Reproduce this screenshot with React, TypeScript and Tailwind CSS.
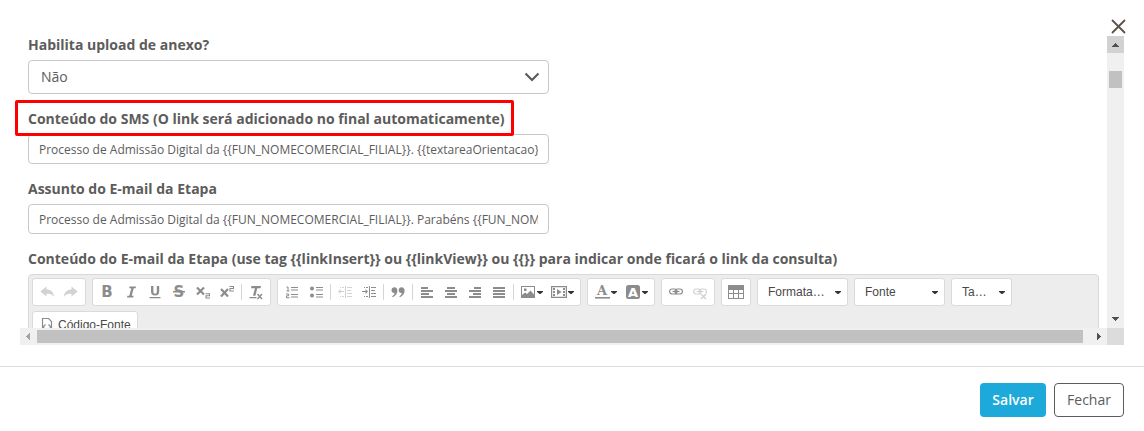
import React from "react";
import clsx from "clsx";

const BODY_FONT = "font-['Open_Sans',sans-serif]";

interface IconProps {
  children: React.ReactNode;
}

const Icon: React.FC<IconProps> = ({ children }) => (
  <svg
    width="16"
    height="16"
    viewBox="0 0 16 16"
    fill="currentColor"
    className="shrink-0 overflow-visible"
    aria-hidden="true"
  >
    {children}
  </svg>
);

const Caret = () => (
  <svg width="6" height="3" viewBox="0 0 6 3" className="shrink-0 text-[#333]" aria-hidden="true">
    <path d="M0 0h6v.8L3.500 3h-1L0 .8z" fill="currentColor" />
  </svg>
);

interface LetterProps {
  x?: number;
  y?: number;
  size?: number;
  fill?: string;
  family?: string;
  children: string;
}

const Letter: React.FC<LetterProps> = ({
  x = 8,
  y = 13,
  size = 14,
  fill = "currentColor",
  family = "DejaVu Sans",
  children,
}) => (
  <text
    x={x}
    y={y}
    fontSize={size}
    fontFamily={family + ", sans-serif"}
    fontWeight="bold"
    textAnchor="middle"
    fill={fill}
  >
    {children}
  </text>
);

interface ToolProps {
  label: string;
  disabled?: boolean;
  menu?: boolean;
  children: React.ReactNode;
}

const Tool: React.FC<ToolProps> = ({ label, disabled, menu, children }) => (
  <button
    type="button"
    aria-label={label}
    disabled={disabled}
    className={clsx(
      "flex h-6 items-center pl-1",
      menu ? "w-[31px] gap-px" : "w-6",
      disabled ? "text-[#d2d2d2]" : "text-[#8c8c8c]"
    )}
  >
    <Icon>{children}</Icon>
    {menu && <Caret />}
  </button>
);

const Group: React.FC<{ children: React.ReactNode }> = ({ children }) => (
  <div className="flex h-7 shrink-0 items-center rounded-[3px] border border-[#dadada] bg-white px-0.5">
    {children}
  </div>
);

const Separator = () => <span className="mx-0.5 h-4 w-px bg-[#d4d4d4]" />;

const Combo: React.FC<{ label: string; text: string; small?: boolean }> = ({
  label,
  text,
  small,
}) => (
  <div
    className={clsx(
      "relative h-7 shrink-0 rounded-[3px] border border-[#dadada] bg-white",
      small ? "w-[61px]" : "w-[91px]"
    )}
  >
    <select
      aria-label={label}
      className="h-full w-full appearance-none bg-transparent pl-2.5 font-['Liberation_Sans',sans-serif] text-xs text-[#484848]"
    >
      <option>{text}</option>
    </select>
    <span className="pointer-events-none absolute inset-y-0 right-1.5 flex items-center">
      <Caret />
    </span>
  </div>
);

const ALIGNMENTS = [
  { label: "Alinhar à esquerda", d: "M2 3h7v2H2zM2 6h12v2H2zM2 9h8v2H2zM2 12h12v2H2z" },
  { label: "Centralizar", d: "M4 3h8v2H4zM2 6h12v2H2zM4 9h8v2H4zM2 12h12v2H2z" },
  { label: "Alinhar à direita", d: "M7 3h7v2H7zM2 6h12v2H2zM6 9h8v2H6zM2 12h12v2H2z" },
  { label: "Justificado", d: "M2 3h12v2H2zM2 6h12v2H2zM2 9h12v2H2zM2 12h12v2H2z" },
];

const Toolbar = () => (
  <div className="flex flex-wrap gap-x-1.5 gap-y-[5px] px-[3px] pt-[3px]">
    <Group>
      <Tool label="Desfazer" disabled>
        <path d="M1.300 7.500 7.500 2.500v3c4 0 7 2 7.700 7.500-2-2.700-4.200-3.200-7.700-3.200v2.700z" />
      </Tool>
      <Tool label="Refazer" disabled>
        <path d="M14.700 7.500 8.500 2.500v3c-4 0-7 2-7.700 7.500 2-2.700 4.200-3.200 7.700-3.200v2.700z" />
      </Tool>
    </Group>

    <Group>
      <Tool label="Negrito">
        <Letter size={15}>B</Letter>
      </Tool>
      <Tool label="Itálico">
        <path d="M6.500 2.500H13l-.4 1.800h-1.900l-2 7.400h1.900l-.4 1.800H4l.4-1.800h1.900l2-7.400H6.100z" />
      </Tool>
      <Tool label="Sublinhado">
        <path d="M4 2h2.400v5.500c0 1.500.5 2.200 1.700 2.200s1.700-.7 1.700-2.200V2h2.400v5.600c0 2.700-1.400 4-4.100 4S4 10.300 4 7.600zM2.500 13h11v1.300h-11z" />
      </Tool>
      <Tool label="Tachado">
        <Letter size={15}>S</Letter>
        <path d="M2 7h12v1.500H2z" />
      </Tool>
      <Tool label="Subscrito">
        <path d="M2 3.500l7 7M9 3.500l-7 7" stroke="currentColor" strokeWidth="2.200" />
        <path d="M10.500 9.700h4v2H11V14h4" fill="none" stroke="currentColor" strokeWidth="1.100" />
      </Tool>
      <Tool label="Sobrescrito">
        <path d="M2 5l7 7.500M9 5l-7 7.500" stroke="currentColor" strokeWidth="2.200" />
        <path d="M10.500 2.500h4v2H11V7h4" fill="none" stroke="currentColor" strokeWidth="1.100" />
      </Tool>
      <Separator />
      <Tool label="Remover formatação">
        <path d="M3.500 2H13l-.5 2.200H9.300l-1.900 7.600H5l1.900-7.600H3zM1.500 13h7v1.300h-7z" />
        <path d="M9.500 10l4.500 5M14 10l-4.500 5" stroke="currentColor" strokeWidth="1.400" />
      </Tool>
    </Group>

    <Group>
      <Tool label="Lista numerada">
        <path d="M7 3h7v1H7zM7 5.500h7v1H7zM7 10h7v1H7zM7 12.500h7v1H7z" />
        <path d="M2.500 3H4v4M2.500 7h3M2 10h2.700v1.800H2.500v2h3" fill="none" stroke="currentColor" />
      </Tool>
      <Tool label="Lista com marcadores">
        <circle cx="4" cy="4.500" r="2" />
        <circle cx="4" cy="11.500" r="2" />
        <path d="M8 3h7v1H8zM8 5.500h7v1H8zM8 10h7v1H8zM8 12.500h7v1H8z" />
      </Tool>
      <Separator />
      <Tool label="Diminuir recuo" disabled>
        <path d="M1 7.500 3.500 5v2H7v1H3.500v2zM8 2h1v12H8zM10 3h5v1h-5zM10 6h4v1h-4zM10 9h5v1h-5zM10 12h5v1h-5zM3 3h1v1H3zM5 3h2v1H5zM3 12h1v1H3zM5 12h2v1H5z" />
      </Tool>
      <Tool label="Aumentar recuo">
        <path d="M7 7.500 4.500 5v2H1v1h3.500v2zM8 2h1v12H8zM10 3h5v1h-5zM10 6h4v1h-4zM10 9h5v1h-5zM10 12h5v1h-5zM3 3h1v1H3zM5 3h2v1H5zM3 12h1v1H3zM5 12h2v1H5z" />
      </Tool>
      <Separator />
      <Tool label="Citação">
        <path d="M4.400 3.200c1.900 0 3 1.400 3 3.400 0 3-1.800 5.400-4.600 6.700l-.7-.9C3.700 11.300 4.500 10.200 4.600 9 2.700 9.200 1.500 8 1.500 6.200s1.200-3 2.900-3zM11.600 3.200c1.900 0 3 1.400 3 3.400 0 3-1.800 5.400-4.600 6.700l-.7-.9c1.600-1.100 2.400-2.200 2.500-3.400-1.900.2-3.100-1-3.100-2.800s1.200-3 2.900-3z" />
      </Tool>
      <Separator />
      {ALIGNMENTS.map((a) => (
        <Tool key={a.label} label={a.label}>
          <path d={a.d} />
        </Tool>
      ))}
      <Separator />
      <Tool label="Imagem" menu>
        <path fillRule="evenodd" d="M1 2h14v12H1zM2 3v10h12V3z" />
        <path d="M2 13v-2l3-2.500L7 10l3.500-3.500L14 10.500V13zM4 4.500h2.500V7H4z" />
      </Tool>
      <Tool label="Vídeo" menu>
        <path fillRule="evenodd" d="M0 2h16v12H0zM1.200 3.200v9.600h13.600V3.200z" />
        <path d="M6 5l4.500 3L6 11zM2 4h2v2H2zM2 7h2v2H2zM2 10h2v2H2zM12 4h2v2h-2zM12 7h2v2h-2zM12 10h2v2h-2z" />
      </Tool>
    </Group>

    <Group>
      <Tool label="Cor do texto" menu>
        <Letter y={11} size={13} family="DejaVu Serif">A</Letter>
        <path d="M1 13h15v1.600H1z" />
      </Tool>
      <Tool label="Cor do fundo" menu>
        <rect x="1" y="1" width="14" height="14" rx="2.500" />
        <Letter y={13} size={13} fill="#fff">A</Letter>
      </Tool>
    </Group>

    <Group>
      <Tool label="Inserir link">
        <g fill="none" stroke="currentColor" strokeWidth="1.200">
          <rect x="1.600" y="5" width="7.400" height="5" rx="2.500" />
          <rect x="7" y="5" width="7.400" height="5" rx="2.500" />
          <path d="M4.500 7.500h7" />
        </g>
      </Tool>
      <Tool label="Remover link" disabled>
        <g fill="none" stroke="currentColor" strokeWidth="1.200">
          <rect x="1.600" y="5" width="7.400" height="5" rx="2.500" />
          <path d="M7.500 9.500C6.500 7 7.500 5 9.500 5H12c3 0 3 4 1.500 4.500M4.500 7.500h7" />
          <path d="M9 10l5 5M14 10l-5 5" strokeWidth="1.500" />
        </g>
      </Tool>
    </Group>

    <Group>
      <Tool label="Tabela">
        <path fillRule="evenodd" d="M0 1h16v14H0zM1 6v3h4V6zM6 6v3h4V6zM11 6v3h4V6zM1 10v4h4v-4zM6 10v4h4v-4zM11 10v4h4v-4z" />
      </Tool>
    </Group>

    <Combo label="Formatação" text="Formata…" />
    <Combo label="Fonte" text="Fonte" />
    <Combo label="Tamanho" text="Ta…" small />

    <Group>
      <button
        type="button"
        className="flex h-6 items-center gap-[3px] px-1 font-['Liberation_Sans',sans-serif] text-xs/[18px] text-[#484848]"
      >
        <span className="text-[#8c8c8c]">
          <Icon>
            <path d="M6 14.500H3.500v-13h6l3 3v10H11M6.500 7.500l-2.500 2.500 2.500 2.500M9.500 7.500 12 10l-2.500 2.500" fill="none" stroke="currentColor" strokeWidth="1.200" />
          </Icon>
        </span>
        Código-Fonte
      </button>
    </Group>
  </div>
);

interface TextFieldProps {
  id: string;
  label: string;
  value: string;
  highlight?: boolean;
}

const labelClass = "text-sm/[18px] font-bold text-[#5c5c5c]";

const TextField: React.FC<TextFieldProps> = ({ id, label, value, highlight }) => (
  <div className="flex flex-col items-start gap-1.5">
    <label htmlFor={id} className={clsx("relative", labelClass)}>
      {label}
      {highlight && (
        <span className="pointer-events-none absolute -top-2.5 -right-2.5 -bottom-2 -left-[13px] rounded-xs border-3 border-[#ff0000]" />
      )}
    </label>
    <input
      id={id}
      type="text"
      defaultValue={value}
      className="h-[30px] w-full max-w-[521px] rounded-[4px] border border-[#c8c8c8] bg-white px-2.5 text-xs text-[#5c5c5c]"
    />
  </div>
);

const ARROWS = {
  up: "M8 7h1v1h1v1h1v1h1v1H5v-1h1V9h1V8h1z",
  down: "M5 6h7v1h-1v1h-1v1H9v1H8V9H7V8H6V7H5z",
  left: "M10 5v7H9v-1H8v-1H7V9H6V8h1V7h1V6h1V5z",
  right: "M7 5v7h1v-1h1v-1h1V9h1V8h-1V7H9V6H8V5z",
};

const ScrollArrow: React.FC<{
  dir: keyof typeof ARROWS;
  label: string;
  className?: string;
}> = ({ dir, label, className }) => (
  <button type="button" aria-label={label} className={clsx("size-[17px] shrink-0", className)}>
    <svg width="17" height="17" viewBox="0 0 17 17" fill="currentColor" aria-hidden="true">
      <path d={ARROWS[dir]} />
    </svg>
  </button>
);

export default function App() {
  return (
    <div className={clsx("bg-white text-sm text-[#5c5c5c]", BODY_FONT)}>
      <header className="flex h-9 items-end justify-end px-[18px] pb-0.5">
        <button type="button" aria-label="Fechar janela">
          <svg width="15" height="15" viewBox="0 0 15 15" aria-hidden="true">
            <path d="M1 1l13 13M14 1L1 14" stroke="#5c5248" strokeWidth="1.800" />
          </svg>
        </button>
      </header>

      <main className="px-5 pb-[21px]">
        <div className="flex h-[292px]">
          <form className="flex min-w-0 flex-1 flex-col gap-4 overflow-y-clip px-2">
            <div className="flex flex-col items-start gap-1.5">
              <label htmlFor="anexo" className={labelClass}>
                Habilita upload de anexo?
              </label>
              <div className="relative w-full max-w-[521px]">
                <select
                  id="anexo"
                  className="h-[34px] w-full appearance-none rounded-[4px] border border-[#c8c8c8] bg-white px-3 text-sm"
                >
                  <option>Não</option>
                  <option>Sim</option>
                </select>
                <span className="pointer-events-none absolute inset-y-0 right-[9px] flex items-center">
                  <svg width="16" height="10" viewBox="0 0 16 10" aria-hidden="true">
                    <path d="M1.500 1.500 8 8l6.500-6.500" fill="none" stroke="#5c5c5c" strokeWidth="2.200" />
                  </svg>
                </span>
              </div>
            </div>

            <TextField
              id="sms"
              label="Conteúdo do SMS (O link será adicionado no final automaticamente)"
              value="Processo de Admissão Digital da {{FUN_NOMECOMERCIAL_FILIAL}}. {{textareaOrientacao}}"
              highlight
            />
            <TextField
              id="assunto"
              label="Assunto do E-mail da Etapa"
              value="Processo de Admissão Digital da {{FUN_NOMECOMERCIAL_FILIAL}}. Parabéns {{FUN_NOME}}"
            />

            <div className="flex flex-col gap-1.5">
              <span className={labelClass}>
                Conteúdo do E-mail da Etapa (use tag {"{{linkInsert}}"} ou {"{{linkView}}"} ou{" "}
                {"{{}}"} para indicar onde ficará o link da consulta)
              </span>
              <div className="h-24 rounded-[4px] border border-[#d9d9d9] bg-[#ededed]">
                <Toolbar />
              </div>
            </div>
          </form>

          <div className="flex w-[17px] flex-col bg-[#f0f0f0] text-[#505050]">
            <ScrollArrow dir="up" label="Rolar para cima" className="bg-[#d2d2d2]" />
            <div className="flex-1 px-0.5 pt-[18px]">
              <div className="h-[17px] bg-[#c1c1c1]" />
            </div>
            <ScrollArrow dir="down" label="Rolar para baixo" />
          </div>
        </div>

        <div className="flex h-[17px] bg-[#f0f0f0] text-[#505050]">
          <ScrollArrow dir="left" label="Rolar para a esquerda" className="text-[#a3a3a3]" />
          <div className="flex-1 py-0.5 pr-[7px]">
            <div className="h-full bg-[#c1c1c1]" />
          </div>
          <ScrollArrow dir="right" label="Rolar para a direita" />
          <div className="w-[17px] bg-[#dcdcdc]" />
        </div>
      </main>

      <footer className="flex justify-end gap-2 border-t border-[#dcdcdc] px-5 py-4">
        <button
          type="button"
          className="h-[34px] w-[66px] rounded-[4px] bg-[#1da9da] text-sm font-semibold text-white"
        >
          Salvar
        </button>
        <button
          type="button"
          className="h-[34px] w-[70px] rounded-[4px] border border-[#5c5c5c] bg-white text-sm"
        >
          Fechar
        </button>
      </footer>
    </div>
  );
}
